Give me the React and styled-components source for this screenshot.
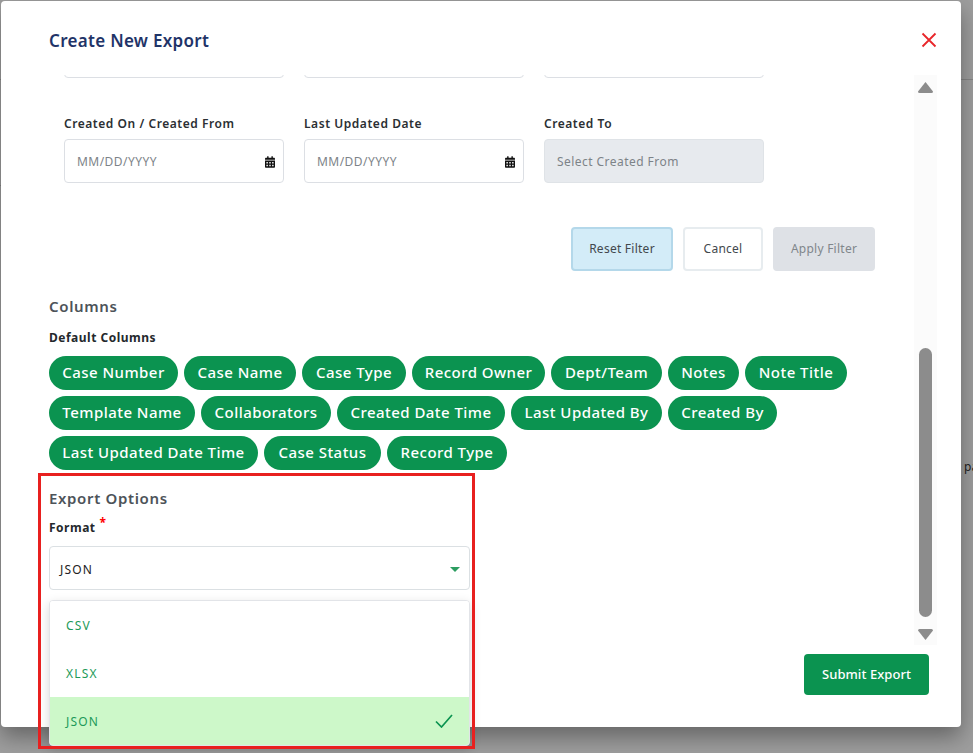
import styled, { createGlobalStyle } from "styled-components";
import { FaCalendarAlt } from "react-icons/fa";

const GlobalStyle = createGlobalStyle`
  html, body {
    margin: 0;
    padding: 0;
    background: #9e9e9e;
  }
  * {
    box-sizing: border-box;
  }
`;

const fontStack = `"Noto Sans", "Open Sans", Arial, sans-serif`;

const Backdrop = styled.div`
  position: relative;
  width: 973px;
  height: 753px;
  overflow: hidden;
  padding: 1px 0 0 1px;
  background: #9e9e9e;
  font-family: ${fontStack};
`;

const BackLine = styled.div`
  position: absolute;
  top: ${({ $top }) => $top}px;
  left: ${({ $left }) => $left}px;
  width: ${({ $width }) => $width}px;
  height: 1px;
  background: #858585;
`;

const BackText = styled.span`
  position: absolute;
  top: 458px;
  left: 964px;
  font-size: 12px;
  color: #222;
`;

const Modal = styled.div`
  position: relative;
  width: 960px;
  height: 726px;
  display: flex;
  flex-direction: column;
  background: #fff;
  border-radius: 4px;
  box-shadow: 0 10px 22px rgba(0, 0, 0, 0.36);
`;

const Header = styled.div`
  height: 74px;
  flex: none;
  display: flex;
  align-items: center;
  justify-content: space-between;
  padding: 3px 24px 0 48px;
`;

const Title = styled.h2`
  margin: 2px 0 0;
  font-size: 17px;
  font-weight: 600;
  letter-spacing: 0.3px;
  color: #1f3468;
`;

const CloseButton = styled.button`
  width: 16px;
  height: 16px;
  padding: 0;
  border: 0;
  background: none;
  display: block;
`;

const Body = styled.div`
  height: 570px;
  flex: none;
  display: flex;
  padding-right: 24px;
`;

const ScrollPane = styled.div`
  flex: 1;
  min-width: 0;
  overflow: hidden;
  padding: 0 38px 0 48px;
`;

const FilterGrid = styled.div`
  display: grid;
  grid-template-columns: repeat(3, 220px);
  column-gap: 20px;
  padding-left: 15px;
  margin-top: ${({ $clipped }) => ($clipped ? "-41px" : "38px")};
`;

const Field = styled.div`
  display: flex;
  flex-direction: column;
`;

const FieldLabel = styled.label`
  height: 16px;
  margin-bottom: 7px;
  font-size: 12px;
  line-height: 16px;
  font-weight: 600;
  letter-spacing: 0.55px;
  color: #2b2f33;
`;

const DateBox = styled.div`
  height: 44px;
  display: flex;
  align-items: center;
  justify-content: space-between;
  padding: 0 8px 0 12px;
  border: 1px solid ${({ $disabled }) => ($disabled ? "#dfe3e7" : "#dcdfe4")};
  border-radius: 4px;
  background: ${({ $disabled }) => ($disabled ? "#e7eaee" : "#fff")};
  font-size: 12px;
  letter-spacing: 0.45px;
  color: #7d8388;

  svg {
    width: 10px;
    height: 12px;
    margin-top: 2px;
    color: #111;
  }
`;

const Actions = styled.div`
  display: flex;
  justify-content: flex-end;
  gap: 10px;
  margin-top: 44px;
`;

const FilterButton = styled.button`
  height: 44px;
  width: ${({ $width }) => $width}px;
  padding: 0 0 2px;
  border-radius: 4px;
  font-family: inherit;
  font-size: 12px;
  letter-spacing: 0.25px;
  border: 2px solid ${({ $variant }) =>
    $variant === "reset" ? "#b4d8ea" : $variant === "cancel" ? "#e7ecef" : "#dee1e6"};
  background: ${({ $variant }) =>
    $variant === "reset" ? "#d3ecf8" : $variant === "cancel" ? "#fff" : "#dee1e6"};
  color: ${({ $variant }) => ($variant === "apply" ? "#80868b" : "#42484d")};
`;

const SectionTitle = styled.h3`
  margin: ${({ $top }) => $top}px 0 0;
  height: 24px;
  font-size: 15px;
  line-height: 22px;
  font-weight: 600;
  letter-spacing: 0.65px;
  color: #4d5359;
`;

const SubLabel = styled.div`
  margin-top: ${({ $top }) => $top}px;
  height: 18px;
  font-size: 12px;
  line-height: 20px;
  font-weight: 700;
  letter-spacing: 0.5px;
  color: #24282c;
  sup {
    color: #f00;
    font-size: 12px;
    line-height: 0;
    margin-left: 4px;
  }
`;

const ChipWrap = styled.div`
  display: flex;
  flex-wrap: wrap;
  gap: 6px;
  margin-top: 10px;
`;

const Chip = styled.span`
  height: 34px;
  width: ${({ $width }) => $width}px;
  display: flex;
  align-items: center;
  justify-content: center;
  padding-bottom: 2px;
  border-radius: 17px;
  background: #0b9350;
  color: #fff;
  font-size: 15px;
  font-weight: 500;
  letter-spacing: 0.45px;
  white-space: nowrap;
`;

const SelectBox = styled.div`
  width: 421px;
  height: 44px;
  margin-top: 10px;
  display: flex;
  align-items: center;
  justify-content: space-between;
  padding: 2px 9px 0 10px;
  border: 1px solid #dbe0e3;
  border-radius: 4px;
  font-size: 12px;
  letter-spacing: 1.2px;
  color: #222;
`;

const Caret = styled.i`
  width: 0;
  height: 0;
  border-left: 5px solid transparent;
  border-right: 5px solid transparent;
  border-top: 5px solid #2c9d61;
`;

const Track = styled.div`
  width: 23px;
  flex: none;
  display: flex;
  flex-direction: column;
  align-items: center;
  padding: 7px 0 5px;
  margin-left: 1px;
  background: #fbfbfb;
`;

const TrackArrow = styled.svg`
  width: 15px;
  height: 12px;
  flex: none;
  display: block;
  fill: #8c8c8c;
`;

const Thumb = styled.div`
  width: 13px;
  height: 269px;
  flex: none;
  margin-top: auto;
  margin-bottom: 11px;
  border-radius: 7px;
  background: #8c8c8c;
`;

const Footer = styled.div`
  flex: 1;
  display: flex;
  justify-content: flex-end;
  align-items: flex-start;
  padding: 9px 32px 0 0;
`;

const SubmitButton = styled.button`
  width: 125px;
  height: 41px;
  padding: 0 0 2px;
  border: 0;
  border-radius: 4px;
  background: #0b9350;
  color: #fff;
  font-family: inherit;
  font-size: 13px;
  font-weight: 500;
  letter-spacing: 0.05px;
`;

const Menu = styled.ul`
  position: absolute;
  top: 599px;
  left: 48px;
  width: 421px;
  height: 146px;
  margin: 0;
  padding: 0;
  list-style: none;
  overflow: hidden;
  background: #fff;
  border: 1px solid #e2e4e8;
  border-radius: 4px;
  box-shadow: 0 4px 12px rgba(0, 0, 0, 0.16);
`;

const MenuItem = styled.li`
  height: 48px;
  display: flex;
  align-items: center;
  justify-content: space-between;
  padding: 0 16px;
  font-size: 12px;
  letter-spacing: 1.2px;
  color: #1d9a59;
  background: ${({ $active }) => ($active ? "#cdf8c9" : "#fff")};
`;

const Highlight = styled.div`
  position: absolute;
  top: 473px;
  left: 38px;
  width: 437px;
  height: 276px;
  border: 3px solid #e8201f;
  pointer-events: none;
`;

const defaultColumns = [
  ["Case Number", 129],
  ["Case Name", 112],
  ["Case Type", 104],
  ["Record Owner", 133],
  ["Dept/Team", 111],
  ["Notes", 71],
  ["Note Title", 102],
  ["Template Name", 146],
  ["Collaborators", 130],
  ["Created Date Time", 168],
  ["Last Updated By", 151],
  ["Created By", 109],
  ["Last Updated Date Time", 209],
  ["Case Status", 117],
  ["Record Type", 120],
];

const App = () => (
  <Backdrop>
    <GlobalStyle />
    <BackLine $top={79} $left={961} $width={12} />
    <BackLine $top={79} $left={0} $width={1} />
    <BackLine $top={185} $left={0} $width={1} />
    <BackText>pa</BackText>
    <Modal>
      <Header>
        <Title>Create New Export</Title>
        <CloseButton aria-label="Close">
          <svg viewBox="0 0 16 16" width="16" height="16">
            <path d="M1.5 1.5 14.5 14.5M14.5 1.5 1.5 14.5" stroke="#e8262a" strokeWidth="1.8" fill="none" />
          </svg>
        </CloseButton>
      </Header>
      <Body>
        <ScrollPane>
          <FilterGrid $clipped>
            <DateBox />
            <DateBox />
            <DateBox />
          </FilterGrid>
          <FilterGrid>
            <Field>
              <FieldLabel>Created On / Created From</FieldLabel>
              <DateBox>
                MM/DD/YYYY
                <FaCalendarAlt />
              </DateBox>
            </Field>
            <Field>
              <FieldLabel>Last Updated Date</FieldLabel>
              <DateBox>
                MM/DD/YYYY
                <FaCalendarAlt />
              </DateBox>
            </Field>
            <Field>
              <FieldLabel>Created To</FieldLabel>
              <DateBox $disabled>Select Created From</DateBox>
            </Field>
          </FilterGrid>
          <Actions>
            <FilterButton $variant="reset" $width={102}>Reset Filter</FilterButton>
            <FilterButton $variant="cancel" $width={80}>Cancel</FilterButton>
            <FilterButton $variant="apply" $width={102}>Apply Filter</FilterButton>
          </Actions>
          <SectionTitle $top={24}>Columns</SectionTitle>
          <SubLabel $top={9}>Default Columns</SubLabel>
          <ChipWrap>
            {defaultColumns.map(([name, width]) => (
              <Chip key={name} $width={width}>{name}</Chip>
            ))}
          </ChipWrap>
          <SectionTitle $top={17}>Export Options</SectionTitle>
          <SubLabel $top={7}>
            Format<sup>*</sup>
          </SubLabel>
          <SelectBox>
            JSON
            <Caret />
          </SelectBox>
        </ScrollPane>
        <Track>
          <TrackArrow viewBox="0 0 15 12">
            <path d="M7.5 0 15 9.5Q15 11 13.5 11H1.5Q0 11 0 9.5Z" />
          </TrackArrow>
          <Thumb />
          <TrackArrow viewBox="0 0 15 12">
            <path d="M7.5 12 15 2.5Q15 1 13.5 1H1.5Q0 1 0 2.5Z" />
          </TrackArrow>
        </Track>
      </Body>
      <Footer>
        <SubmitButton>Submit Export</SubmitButton>
      </Footer>
      <Menu>
        <MenuItem>CSV</MenuItem>
        <MenuItem>XLSX</MenuItem>
        <MenuItem $active>
          JSON
          <svg viewBox="0 0 18 14" width="18" height="14">
            <path d="M1 7.5 6.5 13 17 1" stroke="#0b9350" strokeWidth="1.7" fill="none" />
          </svg>
        </MenuItem>
      </Menu>
    </Modal>
    <Highlight />
  </Backdrop>
);

export default App;
